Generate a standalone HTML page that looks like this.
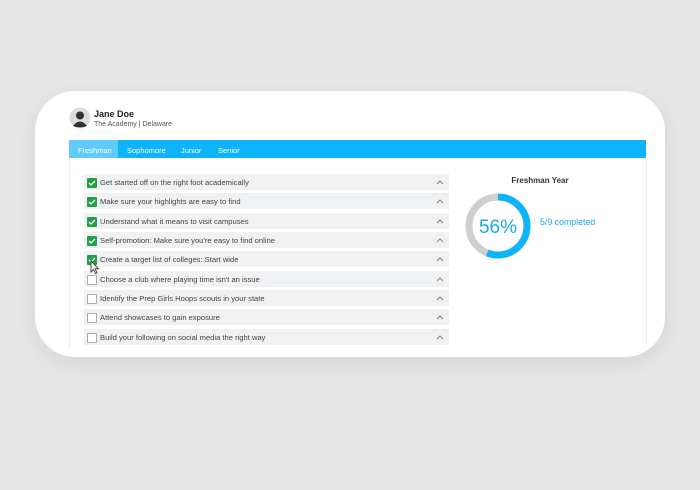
<!DOCTYPE html><html><head><style>
body{margin:0;width:700px;height:490px;background:#e6e6e6;font-family:"Liberation Sans",sans-serif;position:relative;overflow:hidden}
.card{position:absolute;left:35px;top:91px;width:630px;height:266px;background:#fff;border-radius:40px;box-shadow:0 6px 20px rgba(0,0,0,.08)}
.a{position:absolute}
.tabs{left:69px;top:140px;width:577px;height:18px;background:#0db4fb}
.tabs span{position:absolute;top:5.5px;font-size:7.5px;color:#fff}
.panel{left:69px;top:158px;width:576px;height:190px;border:1px solid #eceef0;border-top:none;border-bottom:none}
.row{position:absolute;left:84px;width:365px;height:16px;background:#f0f1f3;font-size:7.6px;color:#444}
.row .cb{position:absolute;left:3px;top:3.5px;width:8px;height:8px;border:1px solid #aaa;background:#fff;border-radius:1px}
.row .cb.on{background:#22a047;border-color:#22a047}
.row .t{position:absolute;left:16px;top:4px}
</style></head><body>
<div class="card"></div>
<svg class="a" style="left:69px;top:107px" width="22" height="22"><circle cx="11" cy="11" r="10.5" fill="#ddd"/><circle cx="11" cy="8.5" r="4" fill="#333"/><path d="M4 19 Q11 10 18 19 Q11 22 4 19Z" fill="#333"/></svg>
<div class="a" style="left:94px;top:109px;font-size:9px;font-weight:bold;color:#222">Jane Doe</div>
<div class="a" style="left:94px;top:121px;font-size:7px;color:#555">The Academy | Delaware</div>
<div class="a tabs"><div class="a" style="left:0;top:0;width:49px;height:18px;background:#5fcbfb"></div><span style="left:9px">Freshman</span><span style="left:58px">Sophomore</span><span style="left:112px">Junior</span><span style="left:149px">Senior</span></div>
<div class="a panel"></div>
<div class="row" style="top:174px"><div class="cb on"></div><div class="t">Get started off on the right foot academically</div></div>
<div class="row" style="top:193px"><div class="cb on"></div><div class="t">Make sure your highlights are easy to find</div></div>
<div class="row" style="top:213px"><div class="cb on"></div><div class="t">Understand what it means to visit campuses</div></div>
<div class="row" style="top:232px"><div class="cb on"></div><div class="t">Self-promotion: Make sure you're easy to find online</div></div>
<div class="row" style="top:251px"><div class="cb on"></div><div class="t">Create a target list of colleges: Start wide</div></div>
<div class="row" style="top:271px"><div class="cb"></div><div class="t">Choose a club where playing time isn't an issue</div></div>
<div class="row" style="top:290px"><div class="cb"></div><div class="t">Identify the Prep Girls Hoops scouts in your state</div></div>
<div class="row" style="top:309px"><div class="cb"></div><div class="t">Attend showcases to gain exposure</div></div>
<div class="row" style="top:329px"><div class="cb"></div><div class="t">Build your following on social media the right way</div></div>
<svg class="a" style="left:0;top:0" width="700" height="490">
<g fill="none" stroke="#666" stroke-width="0.8">
<path d="M437 184 l3-3 3 3"/><path d="M437 203 l3-3 3 3"/><path d="M437 223 l3-3 3 3"/><path d="M437 242 l3-3 3 3"/><path d="M437 261 l3-3 3 3"/><path d="M437 281 l3-3 3 3"/><path d="M437 300 l3-3 3 3"/><path d="M437 319 l3-3 3 3"/><path d="M437 339 l3-3 3 3"/></g>
<g stroke="#fff" stroke-width="1.3" fill="none"><path d="M89 183 l2 2 4-4"/><path d="M89 202 l2 2 4-4"/><path d="M89 222 l2 2 4-4"/><path d="M89 241 l2 2 4-4"/><path d="M89 260 l2 2 4-4"/></g>
<path d="M91 261 l0 11 2.5-2.5 2 4 1.5-.7-2-4 3.5 0z" fill="#fff" stroke="#222" stroke-width="0.8"/>
<circle cx="498" cy="226" r="29" fill="none" stroke="#cfcfcf" stroke-width="7"/>
<circle cx="498" cy="226" r="29" fill="none" stroke="#0db4fb" stroke-width="7" stroke-dasharray="102 200" transform="rotate(-90 498 226)"/>
<text x="498" y="233" font-size="19" fill="#1aa7e8" text-anchor="middle" font-family="Liberation Sans">56%</text>
<text x="540" y="183" font-size="8" font-weight="bold" fill="#333" text-anchor="middle" font-family="Liberation Sans">Freshman Year</text>
<text x="540" y="225" font-size="8.8" fill="#1aa7e8" font-family="Liberation Sans">5/9 completed</text>
</svg>
</body></html>
